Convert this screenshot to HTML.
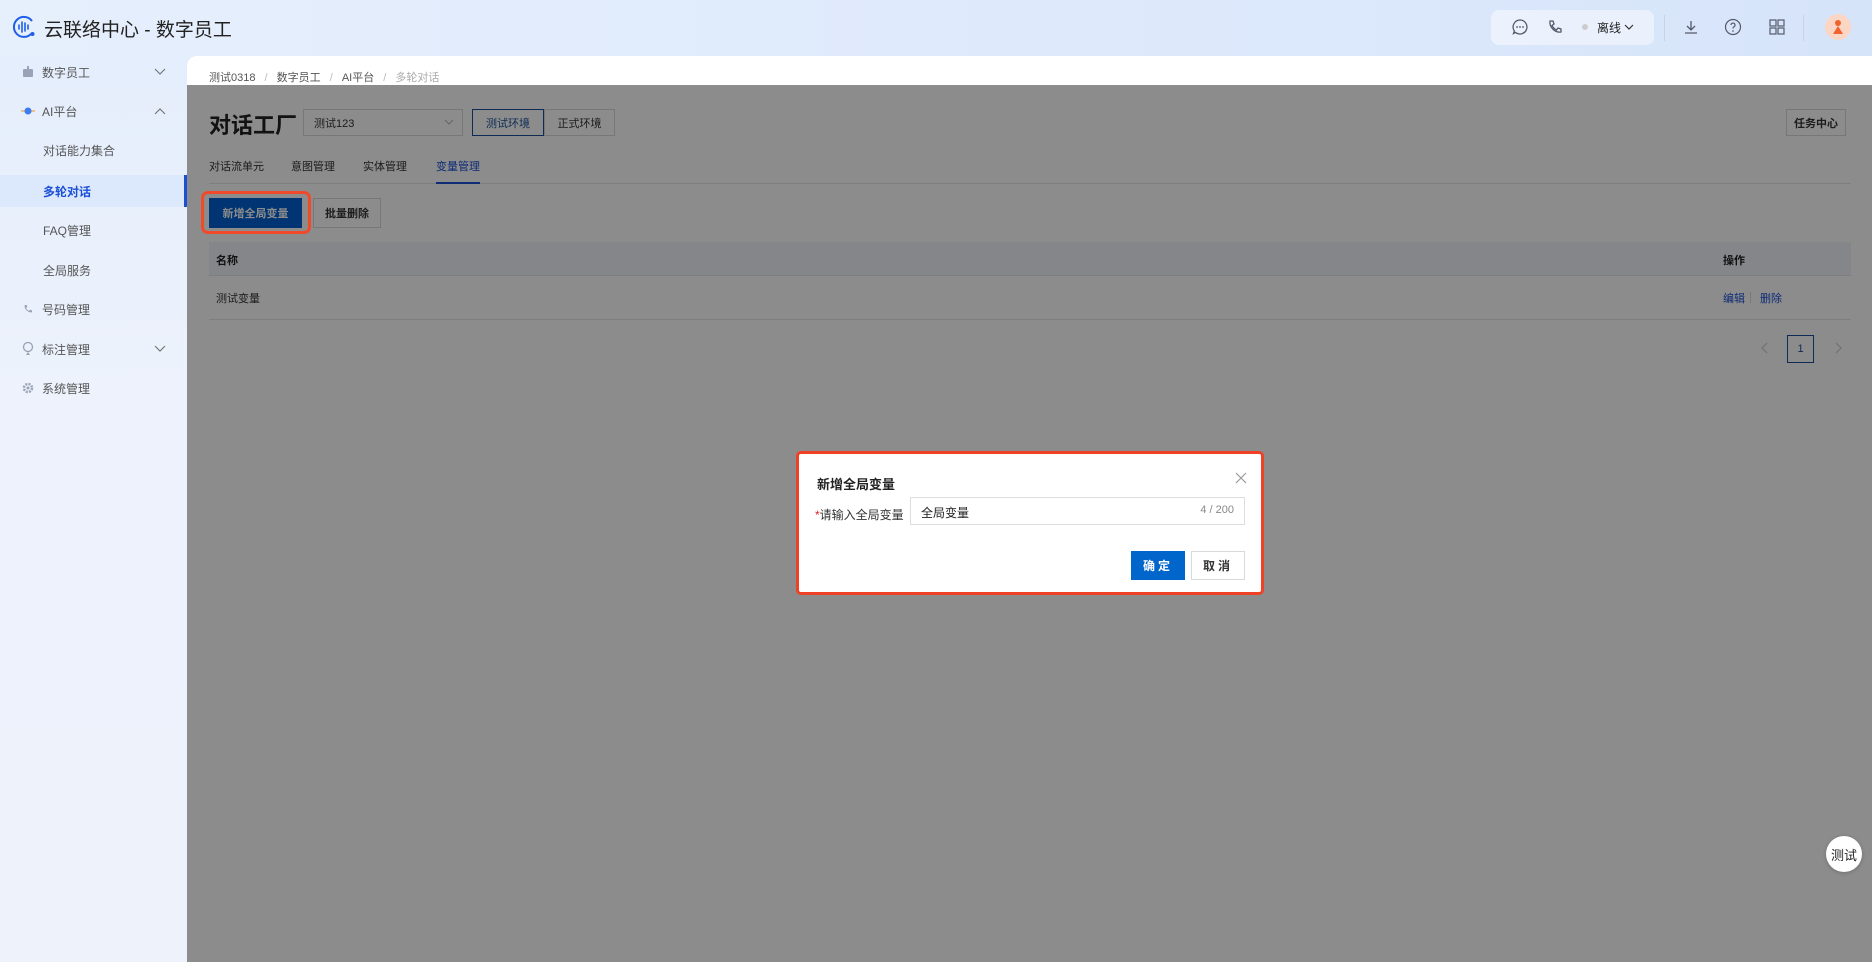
<!DOCTYPE html>
<html><head><meta charset="utf-8"><style>
*{box-sizing:border-box;margin:0;padding:0}
body{width:1872px;height:962px;overflow:hidden;position:relative;font-family:"Liberation Sans","Noto Sans CJK SC",sans-serif;background:linear-gradient(180deg,#e3edfc 0%,#edf2fc 40%,#eef2fb 100%);color:#333}
.hdr{position:absolute;left:0;top:0;width:1872px;height:56px;background:linear-gradient(90deg,#e6effc,#dce8fb 70%,#d6e4fa)}
.abs{position:absolute}
.side .it{position:absolute;left:0;width:187px;height:32px;font-size:12px;color:#555;display:flex;align-items:center}
.main{position:absolute;left:187px;top:56px;width:1685px;height:906px;background:#fff;border-top-left-radius:10px;overflow:hidden}
.ov{position:absolute;left:187px;top:85px;width:1685px;height:877px;background:rgba(0,0,0,0.45)}
.btn{position:absolute;border:1px solid #d9d9d9;background:#fff;font-size:12px;display:flex;align-items:center;justify-content:center;color:#333}
</style></head><body>
<div class="hdr"></div>
<svg class="abs" style="left:12px;top:15px" width="26" height="24" viewBox="0 0 26 24"><path d="M20 6A10 10 0 1 0 19 19" fill="none" stroke="#1f5ee8" stroke-width="2"/><circle cx="20.5" cy="19" r="2" fill="#1f5ee8"/><g stroke="#1f5ee8" stroke-width="1.6" stroke-linecap="round"><line x1="7" y1="10" x2="7" y2="14"/><line x1="10" y1="7" x2="10" y2="17"/><line x1="13" y1="8" x2="13" y2="16"/><line x1="16" y1="10" x2="16" y2="14"/></g></svg>
<div class="abs" style="left:44px;top:15px;font-size:19px;color:#222">云联络中心 - 数字员工</div>
<div class="abs" style="left:1491px;top:10px;width:163px;height:35px;background:rgba(255,255,255,0.45);border-radius:8px"></div>
<svg class="abs" style="left:1511px;top:18px" width="18" height="18" viewBox="0 0 18 18"><path d="M9 2a7 7 0 1 1-4.5 12.4L2.5 15.5l.8-2.6A7 7 0 0 1 9 2z" fill="none" stroke="#555a6a" stroke-width="1.3"/><circle cx="6" cy="9" r=".9" fill="#555"/><circle cx="9" cy="9" r=".9" fill="#555"/><circle cx="12" cy="9" r=".9" fill="#555"/></svg>
<svg class="abs" style="left:1546px;top:18px" width="18" height="18" viewBox="0 0 18 18"><path d="M4 3l3 0 1 3-2 1.5c1 2 2.5 3.5 4.5 4.5L12 10l3 1v3c-6 1-12-5-11-11z" fill="none" stroke="#555a6a" stroke-width="1.3"/></svg>
<div class="abs" style="left:1582px;top:24px;width:6px;height:6px;border-radius:50%;background:#ccc"></div>
<div class="abs" style="left:1597px;top:19px;font-size:12px;color:#222">离线</div>
<svg class="abs" style="left:1624px;top:23px" width="10" height="8"><path d="M1 2l4 4 4-4" fill="none" stroke="#333" stroke-width="1.2"/></svg>
<div class="abs" style="left:1664px;top:15px;width:1px;height:26px;background:#c8d3e6"></div>
<svg class="abs" style="left:1682px;top:18px" width="18" height="18" viewBox="0 0 18 18"><path d="M9 3v9M5 8l4 4 4-4M3 15h12" fill="none" stroke="#555a6a" stroke-width="1.3"/></svg>
<svg class="abs" style="left:1724px;top:18px" width="18" height="18" viewBox="0 0 18 18"><circle cx="9" cy="9" r="7.5" fill="none" stroke="#555a6a" stroke-width="1.2"/><path d="M7 7a2 2 0 1 1 2.5 2c-.5.2-.5.8-.5 1.5" fill="none" stroke="#555a6a" stroke-width="1.2"/><circle cx="9" cy="13" r=".8" fill="#555"/></svg>
<svg class="abs" style="left:1769px;top:19px" width="16" height="16" viewBox="0 0 16 16"><g fill="none" stroke="#555a6a" stroke-width="1.2"><rect x="1" y="1" width="6" height="6"/><rect x="9" y="1" width="6" height="6"/><rect x="1" y="9" width="6" height="6"/><rect x="9" y="9" width="6" height="6"/></g></svg>
<div class="abs" style="left:1803px;top:15px;width:1px;height:26px;background:#c8d3e6"></div>
<div class="abs" style="left:1825px;top:14px;width:26px;height:26px;border-radius:50%;background:#fbd6c4"></div>
<svg class="abs" style="left:1830px;top:18px" width="16" height="18" viewBox="0 0 16 18"><circle cx="8" cy="5" r="3" fill="#f0622e"/><path d="M3 16l5-8 5 8z" fill="#f0622e"/></svg>

<div class="side">
<svg class="abs" style="left:22px;top:66px" width="12" height="12"><rect x="1" y="3" width="10" height="8" rx="1" fill="#9aa3b5"/><rect x="5" y="0" width="2" height="3" fill="#9aa3b5"/></svg>
<div class="it" style="top:56px;padding-left:42px">数字员工</div>
<svg class="abs" style="left:154px;top:68px" width="12" height="8"><path d="M1 1l5 5 5-5" fill="none" stroke="#777" stroke-width="1.2"/></svg>
<svg class="abs" style="left:21px;top:105px" width="14" height="12"><line x1="0" y1="6" x2="14" y2="6" stroke="#f0a040" stroke-width="1.2"/><circle cx="7" cy="6" r="3.5" fill="#3b7cf0"/></svg>
<div class="it" style="top:95px;padding-left:42px">AI平台</div>
<svg class="abs" style="left:154px;top:107px" width="12" height="8"><path d="M1 7l5-5 5 5" fill="none" stroke="#777" stroke-width="1.2"/></svg>
<div class="it" style="top:134px;padding-left:43px">对话能力集合</div>
<div class="it" style="top:175px;height:32px;background:#dce8fc;padding-left:43px;color:#1a4fd6;font-weight:bold;border-right:3px solid #1a4fd6">多轮对话</div>
<div class="it" style="top:214px;padding-left:43px">FAQ管理</div>
<div class="it" style="top:254px;padding-left:43px">全局服务</div>
<svg class="abs" style="left:22px;top:303px" width="12" height="12" viewBox="0 0 18 18"><path d="M4 3l3 0 1 3-2 1.5c1 2 2.5 3.5 4.5 4.5L12 10l3 1v3c-6 1-12-5-11-11z" fill="#9aa3b5"/></svg>
<div class="it" style="top:293px;padding-left:42px">号码管理</div>
<svg class="abs" style="left:22px;top:342px" width="12" height="13"><circle cx="6" cy="5" r="4.5" fill="none" stroke="#9aa3b5" stroke-width="1.3"/><path d="M6 10l-2 3h4z" fill="#9aa3b5"/></svg>
<div class="it" style="top:333px;padding-left:42px">标注管理</div>
<svg class="abs" style="left:154px;top:345px" width="12" height="8"><path d="M1 1l5 5 5-5" fill="none" stroke="#777" stroke-width="1.2"/></svg>
<svg class="abs" style="left:22px;top:382px" width="12" height="12"><circle cx="6" cy="6" r="4" fill="none" stroke="#9aa3b5" stroke-width="2.5" stroke-dasharray="2 1.2"/><circle cx="6" cy="6" r="1.5" fill="#9aa3b5"/></svg>
<div class="it" style="top:372px;padding-left:42px">系统管理</div>
</div>

<div class="main">
<div class="abs" style="left:22px;top:13px;font-size:11px;color:#555">测试0318 <span style="color:#bbb;margin:0 6px">/</span> 数字员工 <span style="color:#bbb;margin:0 6px">/</span> AI平台 <span style="color:#bbb;margin:0 6px">/</span> <span style="color:#aaa">多轮对话</span></div>
<div class="abs" style="left:22px;top:52px;font-size:22px;font-weight:bold;color:#222">对话工厂</div>
<div class="btn" style="left:116px;top:53px;width:160px;height:27px;justify-content:flex-start;padding-left:10px;font-size:11px">测试123</div>
<svg class="abs" style="left:257px;top:63px" width="10" height="7"><path d="M1 1l4 4 4-4" fill="none" stroke="#bbb" stroke-width="1.1"/></svg>
<div class="btn" style="left:285px;top:53px;width:72px;height:27px;border-color:#1a4f9a;color:#1a4f9a;font-size:11px">测试环境</div>
<div class="btn" style="left:357px;top:53px;width:71px;height:27px;font-size:11px">正式环境</div>
<div class="btn" style="left:1599px;top:53px;width:60px;height:27px;font-weight:bold;font-size:11px">任务中心</div>
<div class="abs" style="left:22px;top:102px;font-size:11px;color:#333">对话流单元</div>
<div class="abs" style="left:104px;top:102px;font-size:11px;color:#333">意图管理</div>
<div class="abs" style="left:176px;top:102px;font-size:11px;color:#333">实体管理</div>
<div class="abs" style="left:249px;top:102px;font-size:11px;color:#1a4fd6">变量管理</div>
<div class="abs" style="left:22px;top:127px;width:1642px;height:1px;background:#e6e6e6"></div>
<div class="abs" style="left:249px;top:126px;width:44px;height:2px;background:#1a4fd6"></div>
<div class="btn" style="left:22px;top:142px;width:93px;height:30px;background:#0060d0;border-color:#0060d0;color:#fff;font-weight:bold;font-size:11px">新增全局变量</div>
<div class="btn" style="left:126px;top:142px;width:68px;height:30px;font-weight:bold;font-size:11px">批量删除</div>
<div class="abs" style="left:22px;top:186px;width:1642px;height:34px;background:#f1f4fa;border-bottom:1px solid #e6e6e6"></div>
<div class="abs" style="left:29px;top:196px;font-size:11px;font-weight:bold;color:#222">名称</div>
<div class="abs" style="left:1536px;top:196px;font-size:11px;font-weight:bold;color:#222">操作</div>
<div class="abs" style="left:29px;top:234px;font-size:11px;color:#333">测试变量</div>
<div class="abs" style="left:1536px;top:234px;font-size:11px;color:#1a4fd6">编辑</div>
<div class="abs" style="left:1563px;top:236px;width:1px;height:11px;background:#ddd"></div>
<div class="abs" style="left:1573px;top:234px;font-size:11px;color:#1a4fd6">删除</div>
<div class="abs" style="left:22px;top:263px;width:1642px;height:1px;background:#e6e6e6"></div>
<svg class="abs" style="left:1574px;top:286px" width="8" height="12"><path d="M6 1L1 6l5 5" fill="none" stroke="#ccc" stroke-width="1.2"/></svg>
<div class="btn" style="left:1600px;top:279px;width:27px;height:28px;border-color:#1a4f9a;color:#1a4f9a;font-size:11px">1</div>
<svg class="abs" style="left:1647px;top:286px" width="8" height="12"><path d="M2 1l5 5-5 5" fill="none" stroke="#ccc" stroke-width="1.2"/></svg>
</div>
<div class="ov"></div>
<div class="abs" style="left:201px;top:191px;width:110px;height:43px;border:3px solid #f04a2a;border-radius:7px"></div>
<div class="abs" style="left:1826px;top:836px;width:36px;height:36px;border-radius:50%;background:#fff;box-shadow:0 1px 4px rgba(0,0,0,.2);display:flex;align-items:center;justify-content:center;font-size:13px;color:#222">测试</div>

<div class="abs" style="left:796px;top:451px;width:468px;height:144px;background:#fff;border:3px solid #ef4126;border-radius:5px">
<div class="abs" style="left:18px;top:20px;font-size:13px;font-weight:bold;color:#222">新增全局变量</div>
<svg class="abs" style="left:436px;top:18px" width="12" height="12"><path d="M1 1l10 10M11 1L1 11" stroke="#999" stroke-width="1.2"/></svg>
<div class="abs" style="left:16px;top:52px;font-size:12px;color:#333"><span style="color:#e02020">*</span>请输入全局变量</div>
<div class="abs" style="left:111px;top:43px;width:335px;height:28px;border:1px solid #ddd;font-size:12px;padding:6px 10px;color:#222">全局变量<span style="position:absolute;right:10px;top:6px;color:#888;font-size:11px">4 / 200</span></div>
<div class="btn" style="left:332px;top:97px;width:54px;height:29px;background:#0066cc;border-color:#0066cc;color:#fff;font-weight:bold;letter-spacing:3px">确定</div>
<div class="btn" style="left:392px;top:97px;width:54px;height:29px;font-weight:bold;letter-spacing:3px">取消</div>
</div>
</body></html>
